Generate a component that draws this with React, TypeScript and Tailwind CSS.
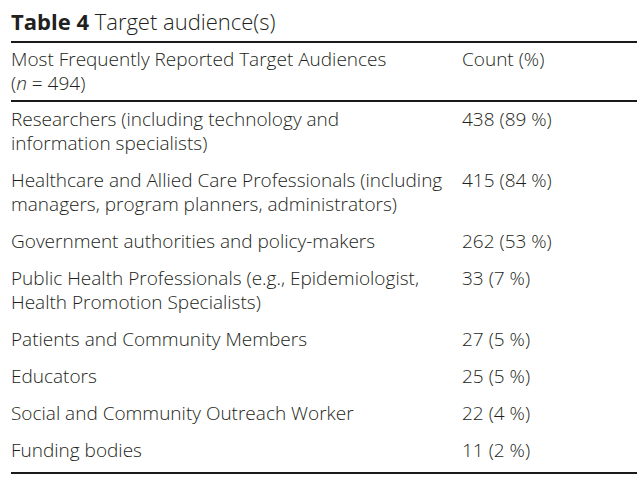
const rows = [
  { label: ["Researchers (including technology and", "information specialists)"], count: "438 (89 %)" },
  {
    label: ["Healthcare and Allied Care Professionals (including", "managers, program planners, administrators)"],
    count: "415 (84 %)",
  },
  { label: ["Government authorities and policy-makers"], count: "262 (53 %)" },
  {
    label: ["Public Health Professionals (e.g., Epidemiologist,", "Health Promotion Specialists)"],
    count: "33 (7 %)",
  },
  { label: ["Patients and Community Members"], count: "27 (5 %)" },
  { label: ["Educators"], count: "25 (5 %)" },
  { label: ["Social and Community Outreach Worker"], count: "22 (4 %)" },
  { label: ["Funding bodies"], count: "11 (2 %)" },
]

export default function App() {
  return (
    <div className="w-[644px] h-[482px] bg-white overflow-hidden pl-[11px] pr-[7px] text-[#231f20] font-['Open_Sans',sans-serif]">
      {/* Title */}
      <div className="h-[41px] pt-[8px] text-[22px] leading-[1.2] whitespace-nowrap">
        <span className="font-bold">Table 4</span> <span className="font-light">Target audience(s)</span>
      </div>

      {/* Header */}
      <div className="border-t-2 border-b-2 border-[#1a1a1a] pt-[4px] pb-[5px] grid grid-cols-[451px_1fr] text-[19px] leading-[24px] font-light">
        <div>
          <div>Most Frequently Reported Target Audiences</div>
          <div>
            (<span className="italic">n</span> = 494)
          </div>
        </div>
        <div>Count (%)</div>
      </div>

      {/* Body */}
      <div className="border-b-2 border-[#1a1a1a] pt-[5px] pb-[10px] flex flex-col gap-[13px] text-[19px] leading-[24px] font-light">
        {rows.map((row, i) => (
          <div key={i} className="grid grid-cols-[451px_1fr]">
            <div className="whitespace-nowrap">
              {row.label.map((line, j) => (
                <div key={j}>{line}</div>
              ))}
            </div>
            <div className="whitespace-nowrap">{row.count}</div>
          </div>
        ))}
      </div>
    </div>
  )
}
